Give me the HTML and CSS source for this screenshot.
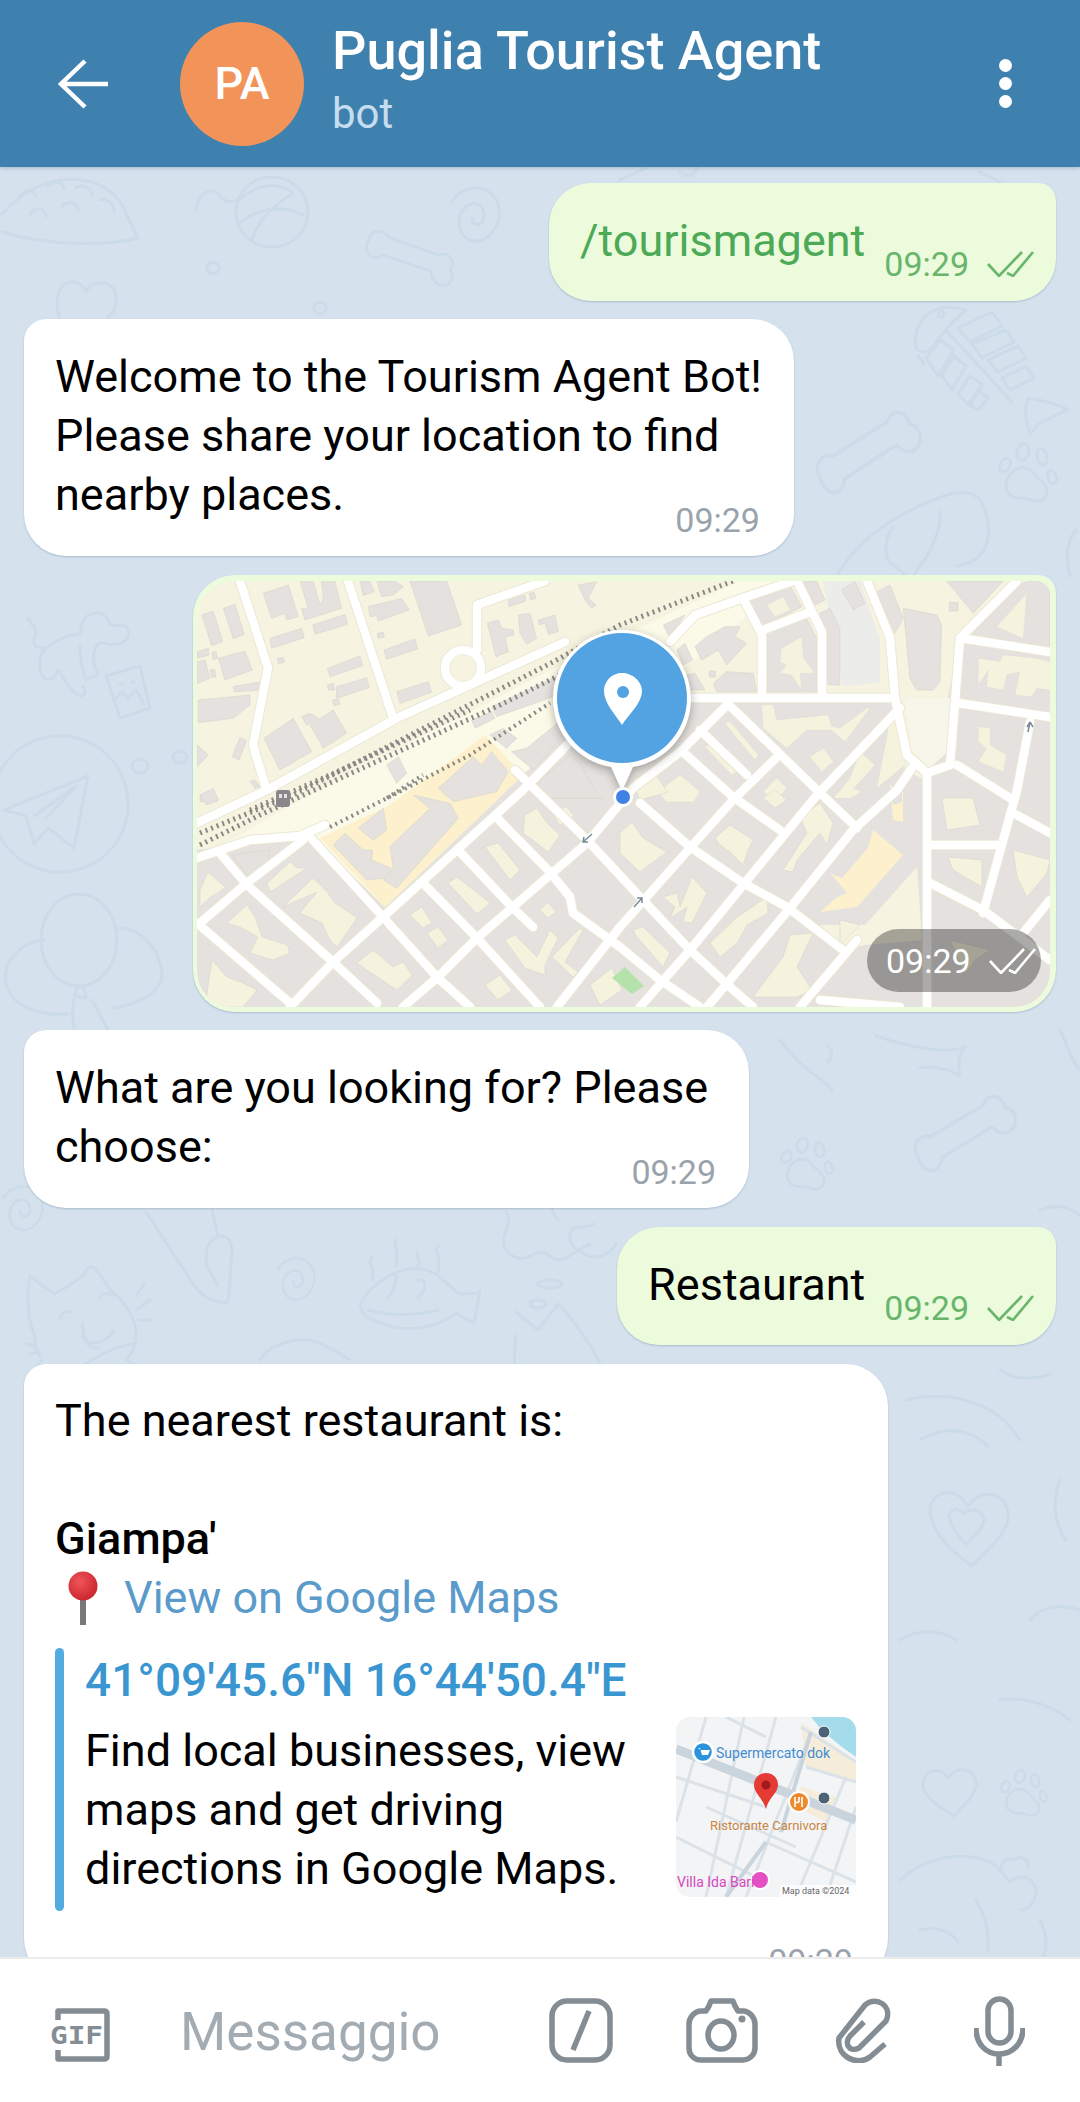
FILE: index.html
```html
<!DOCTYPE html>
<html lang="it">
<head>
<meta charset="utf-8">
<title>Puglia Tourist Agent</title>
<link rel="stylesheet" href="styles.css">
</head>
<body>
<div class="page">
  <header class="topbar">
    <svg class="back" viewBox="0 0 52 52"><path d="M50 26H4M27 3L3 26l24 23"/></svg>
    <div class="avatar">PA</div>
    <div class="peer">
      <div class="peer-name">Puglia Tourist Agent</div>
      <div class="peer-status">bot</div>
    </div>
    <div class="dots"><i></i><i></i><i></i></div>
  </header>

  <main class="chat">
    <svg class="doodles" viewBox="0 167 1080 1790" aria-hidden="true">
      <defs>
        <path id="bone" d="M8 50C0 40 8 30 20 32L70 6C72-4 88-4 90 8c12 0 14 16 4 20-6 2-12 0-16-4L30 50C30 62 14 66 8 50z"/>
        <g id="paw"><path d="M8 42c0-12 10-20 20-18 6 1 8 8 14 12 8 6 10 16 2 20-6 3-12-2-20-2-8 0-16-2-16-12z"/><ellipse cx="7" cy="21" rx="5" ry="7" transform="rotate(30 7 21)"/><ellipse cx="25" cy="8" rx="6" ry="8" transform="rotate(15 25 8)"/><ellipse cx="44" cy="13" rx="5" ry="8" transform="rotate(-12 44 13)"/><ellipse cx="54" cy="33" rx="4" ry="7" transform="rotate(-15 54 33)"/></g>
        <path id="spiral" d="M2 22C12 4 40 2 48 24c6 22-12 42-28 36C4 54 6 28 22 24c12-2 16 14 8 20-6 2-8-2-8-6"/>
      </defs>
      <!-- top -->
      <path d="M2 214c14-14 30-30 60-34 26-4 56 8 64 34l12 24c-30 8-92 8-136-6"/>
      <path d="M20 196c6-8 14-6 16 0M48 186c6-6 14-4 16 2M76 188c8-4 16 0 16 8M100 200c8-2 14 4 14 12M30 214c6-8 14-6 16 2M62 206c6-6 14-4 16 4"/>
      <ellipse cx="272" cy="212" rx="36" ry="35"/>
      <path d="M240 200c14-14 34-20 52-8M238 224c16-14 44-22 66-8M252 240c6-20 20-34 40-46M196 210c2-16 14-24 22-16 6 8 12 10 22 4"/>
      <use href="#spiral" transform="translate(450 180)"/>
      <use href="#bone" transform="translate(358 232) scale(1.05 1) rotate(48 50 30) scale(.9)"/>
      <circle cx="213" cy="268" r="6"/><circle cx="320" cy="308" r="6"/>
      <path d="M60 320c-6-18-2-38 12-38 8 0 12 4 14 10 6-14 28-12 30 4 2 8-4 18-12 26"/>
      <path d="M620 180l26-12M680 172c8 6 14 4 18-6M980 172l20 10"/>
      <!-- fish skeleton, bone, paw, wing -->
      <path d="M916 348c-2-14 2-26 12-34 10-8 24-8 38-4-12 10-26 26-34 38-4 4-10 6-16 0zM946 330l66 72M924 364l-6-8"/>
      <circle cx="941" cy="314" r="3"/>
      <path d="M958 328l34-16 10 14-32 16zM972 344l34-14 8 12-32 16zM988 360l30-14 8 12-28 14zM1002 378l24-12 8 12-24 12zM926 358l14-18 14 10-16 26zM942 376l12-20 12 10-14 24zM958 394l12-18 12 8-12 22zM968 404l10-14 10 8-10 12z"/>
      <path d="M1028 398c12 2 30 6 40 12-10 4-22 10-30 14-2 4-6 8-8 10-4-10-6-24-2-36z"/>
      <use href="#bone" transform="translate(812 414) scale(1.08 1.3)"/>
      <use href="#paw" transform="translate(998 444)"/>
      <path d="M838 574c24-42 74-68 112-80 18-4 30 0 34 14 6 14 6 30 0 42-8 12-18 14-26 16M892 528c-6 10-8 24-4 32 8 8 16 14 24 20 4-10 8-14 14-22 8-14 16-34 14-46"/>
      <path d="M1076 530c-8 10-12 24-6 46"/>
      <!-- left column -->
      <path d="M28 618c6 10 10 12 6 22-2 8 8 8 12 8-8 8-8 22-2 30 8 4 12-2 14-8 8 10 12 24 24 26 4-2 4-6 0-10M46 648c8-6 20-14 34-14 2-12 4-18 12-20 12-4 16 6 18 10 6 4 16-2 18 6 2 8-4 14-12 14-10 2-12-4-18 0-6 8-6 20 0 30l-12 6c-4-10-6-22-6-34"/>
      <path d="M106 676l34-10 10 42-30 10zM114 700l8-8 6 6 8-8 8 14M120 684h2M132 682h2"/>
      <circle cx="60" cy="804" r="68" transform="rotate(-15 60 804)"/>
      <path d="M4 810l84-34-14 72-26-20-14 16-8-28zM34 816l42-30-30 32"/>
      <ellipse cx="140" cy="766" rx="8" ry="7"/><ellipse cx="180" cy="757" rx="7" ry="6"/>
      <ellipse cx="79" cy="940" rx="38" ry="46"/>
      <path d="M44 940c-22 2-42 20-38 44 6 24 36 32 62 30M118 928c24 0 44 24 44 48-2 18-28 30-50 32M78 986l-4 10 12 2-2-10zM74 1000c-2 8-2 16 0 28M92 1000l16 30"/>
      <use href="#spiral" transform="translate(2 1180) scale(.82)"/>
      <!-- mid right -->
      <path d="M780 1040c22 30 40 36 52 50M828 1046c6 6 4 12 0 16M876 1036c30 10 72 20 90 10-8 10-8 18-6 30-12-8-28-10-40-8"/>
      <use href="#bone" transform="translate(910 1098) scale(1.05 1.2)"/>
      <use href="#paw" transform="translate(780 1138) scale(.9)"/>
      <path d="M640 1050c10 6 18 18 22 32M1060 1030c8 16 10 30 20 40M1040 1210c16-6 28-4 40 6"/>
      <circle cx="720" cy="1178" r="5"/>
      <!-- cat row -->
      <path d="M30 1276l24 18c10-6 20-10 30-20 2-4 6-8 8-8 8 8 14 16 18 24 10 8 20 18 24 32 4 12 2 28-8 38 14 6 26 16 32 20 8-2 14 0 16 6 4 6-2 12-8 14M30 1276c-4 22-2 44 4 58 2 8 0 16 6 22"/>
      <path d="M136 1310l14-10M138 1320h14M136 1296l8-12M60 1318c2-6 6-8 10-6M100 1298c4-6 8-6 12-2M82 1324c2 12 4 16 6 18 10 4 22-4 26-12M82 1336c4 6 8 14 16 12M26 1344l10 2M30 1354l8-2M36 1368l6-8M80 1368c14-10 30-20 52-24"/>
      <path d="M146 1212l50 76c8 10 22 16 32 14 2-10 2-30 4-50 0-12-4-16-12-16-10 2-14 12-14 24 0 8 6 14 12 26M212 1210l6 26"/>
      <use href="#spiral" transform="translate(276 1252) scale(.78)"/>
      <path d="M360 1305c10-22 40-40 62-36 14 2 24 14 36 24 10 2 20 0 22-2l-6 32c-6-2-12-6-18-10-22 18-56 20-80 8-10-2-14-8-16-16zM368 1310c20 6 50 6 70 0M396 1276c0 10-4 16-8 22M418 1280c6 0 8 2 6 10l-6 8"/>
      <path d="M396 1240c-4 6 4 10 0 16 0 4 2 6 0 10M372 1258c-6 6 4 10 0 16 0 2 2 4 0 6M418 1252c-4 6 4 8 0 14M438 1246c-6 6 4 10 0 16 0 4 2 6 0 10"/>
      <path d="M506 1212c8 10-6 24-2 34 4 10 16 16 26 10 8-4 12-6 20 0 6 6 16 4 22-2l18-10M594 1224c-8 6-20-2-24 10-2 12 6 14 14 20 14 8 28-2 32-10M550 1200c2 8 2 14 8 20"/>
      <path d="M516 1336c-2 8-2 30 0 42M516 1312l22 18 20-26c16 16 34 42 42 60"/>
      <ellipse cx="550" cy="1284" rx="12" ry="4"/><ellipse cx="538" cy="1304" rx="8" ry="4"/>
      <path d="M260 1360c8-14 30-22 50-20 14 4 28 12 40 20"/>
      <!-- bottom right -->
      <path d="M906 1400c40-10 90 0 114 40M1000 1370c14 10 34 10 50 4M920 1440c24-14 50-12 68 6"/>
      <path d="M932 1520c-10-24 20-40 36-14 16-22 44-10 40 14-4 18-24 32-36 46-16-12-34-26-40-46zM950 1520c-4-8 6-16 14-6 8-8 22-2 20 8-2 8-12 16-18 22-6-6-14-14-16-24z"/>
      <path d="M1060 1480c-8 20-6 44 6 60M1030 1620c12-14 30-16 50-10"/>
      <path d="M924 1790c-6-16 14-28 24-12 12-16 30-6 28 8-2 12-14 20-22 30-12-8-26-16-30-26z"/>
      <path d="M900 1640c14-10 40-12 56 0M1000 1700c22-4 50 4 70 20M900 1880c24-22 60-30 90-18 10 6 14 14 20 20 8-8 18-6 24 2 6 10-2 24-12 26M976 1900c8 14 14 30 12 50M1040 1920c6 12 8 24 4 36"/>
      <path d="M1002 1872c-4-8 4-16 12-12 6-6 16 0 14 8M920 1930c14-4 30 0 38 12"/>
      <use href="#paw" transform="translate(1000 1770) scale(.8)"/>
    </svg>

    <div class="msg out row-msg">
      <span class="cmd">/tourismagent</span>
      <span class="meta">09:29
        <svg class="ticks" viewBox="0 0 47 26"><path d="M1 13l11 12L35 1M20 22l6 3L46 1"/></svg>
      </span>
    </div>

    <div class="msg in first-in">
      <div class="body">Welcome to the Tourism Agent Bot!<br>Please share your location to find<br>nearby places.</div>
      <span class="meta grey">09:29</span>
    </div>

    <div class="msg out map-msg">
      <svg class="map" viewBox="197 581 853 426">
        <defs>
          <g id="r">
            <path d="M197 823L267 790L397 718L565 642"/>
            <path d="M240 581L268 668L253 745L265 785"/>
            <path d="M348 581L393 718"/>
            <path d="M477 650V605L545 581"/>
            <circle cx="463" cy="668" r="18"/>
            <path d="M197 858L250 840L300 836L325 825"/>
            <path d="M200 923L247 883L303 840"/>
            <path d="M290 1007L333 962L383 917L523 790L567 745"/>
            <path d="M403 1007L438 977L477 938L587 843L633 788L680 752L727 705"/>
            <path d="M557 1007L620 927L690 848L733 800L777 757"/>
            <path d="M640 1007L690 950L753 873L817 795L900 708"/>
            <path d="M707 1007L730 980L790 908L853 830L897 790L912 768"/>
            <path d="M800 1007L857 940"/>
            <path d="M310 837L383 917L437 977L470 1007"/>
            <path d="M220 853L247 885L333 962L377 1003"/>
            <path d="M197 923L290 1003"/>
            <path d="M423 883L477 938L540 1007"/>
            <path d="M460 852L510 905L533 927"/>
            <path d="M497 818L548 870L570 897L573 913L620 947L660 980L700 1007"/>
            <path d="M515 770L587 840L640 897L690 950L730 987L753 1007"/>
            <path d="M640 803L690 847L743 883L787 907L843 950"/>
            <path d="M733 797L780 830"/>
            <path d="M727 703L817 790L857 828"/>
            <path d="M700 730L747 775"/>
            <path d="M683 752L733 797"/>
            <path d="M693 698H895"/>
            <path d="M867 581L890 638L895 698L907 755L927 773L950 765L955 702L960 638L1017 581"/>
            <path d="M670 642L695 615L743 598L793 581"/>
            <path d="M743 598L762 635V693"/>
            <path d="M797 581L822 632V693"/>
            <path d="M763 630L810 612"/>
            <path d="M960 638L1050 652"/>
            <path d="M958 703L1050 717"/>
            <path d="M927 773V1007"/>
            <path d="M957 765L1010 798"/>
            <path d="M1030 722L1017 790L983 913"/>
            <path d="M930 845H997"/>
            <path d="M930 883L983 910L1050 960"/>
            <path d="M1013 813L1050 833"/>
            <path d="M1020 937L1050 900"/>
            <path d="M820 1000L900 1007"/>
          </g>
        </defs>
        <rect class="land" x="197" y="581" width="853" height="426"/>
        <path class="pale" d="M197 860L300 800L570 660L740 581H790L620 720L385 907L310 835Z"/>
        <path class="block" d="M197 850L310 835L385 907L523 775L570 730L640 695L895 700L905 770L925 780V1007H197Z"/>
        <path class="block" d="M932 772L960 640L1050 650V1007H932Z"/>
        <path class="yellow" d="M320 838L390 805L485 735L523 775L385 907Z"/>
        <path class="land" d="M820 925L865 925L917 867L922 940L865 945L840 950Z"/>
        <path class="plaza" d="M905 698H958L950 750L930 768L912 750Z"/>
        <path class="lot" d="M823 581H860L880 640V682L843 687Z"/>
        <path class="yellow" d="M820 912L857 907L903 855L873 830L868 848L842 878L830 873L847 893L837 897Z"/>
        <path class="yellow" d="M893 820L903 822V792L890 785ZM893 793L902 790V802L893 805Z"/>
        <g class="bld" transform="translate(190 575) scale(.3333)">
          <path d="M220 55L295 30L325 125L290 135L285 115L245 130Z"/>
          <path d="M330 20H370L390 90L400 70L395 20H435L455 100L345 135L335 100L355 100Z"/>
          <path d="M35 120L70 108L98 200L65 212Z"/><path d="M100 100L135 88L163 178L130 192Z"/>
          <path d="M85 250L165 228L187 285L105 315Z"/><path d="M240 190L335 160L343 188L245 220Z"/>
          <path d="M368 150L465 118L473 148L375 178Z"/><path d="M25 375L180 360V390L130 430L25 443Z"/>
          <path d="M130 335L215 320L218 345L133 350Z"/><path d="M222 490L310 430L365 530L270 585Z"/>
          <path d="M360 450L430 405L470 475L400 520Z"/><path d="M335 425L360 415L385 430L350 450Z"/>
          <path d="M127 545L150 487L170 497L147 555Z"/><path d="M412 280L510 243L518 272L420 305Z"/>
          <path d="M440 335L530 308L538 338L440 370Z"/><path d="M412 330L430 325L435 345L415 345Z"/>
          <path d="M428 375L445 372L450 388L432 392Z"/><path d="M582 225L675 192L683 222L590 253Z"/>
          <path d="M620 350L715 320L725 352L630 385Z"/><path d="M660 18H770L815 150L715 183Z"/>
          <path d="M510 18H540L553 50L520 62Z"/><path d="M535 95L635 70L658 105L565 138L560 122L540 125Z"/>
          <path d="M560 18H615L640 35L610 60L575 65Z"/>
          <path d="M892 145L925 135L935 160L970 165L972 180L945 185L955 230L918 245Z"/>
          <path d="M985 120L1020 115L1040 190L1010 208L990 175Z"/>
          <path d="M1045 135L1095 120L1105 170L1075 178L1065 145L1048 150Z"/>
          <path d="M955 75L1005 60L1007 78L958 95Z"/><path d="M1018 55L1033 52L1037 70L1022 75Z"/>
          <path d="M1165 30L1220 20L1195 70L1218 90L1205 100L1185 75Z"/>
          <path d="M22 260L45 255L60 310L22 325Z"/><path d="M65 232L78 230L83 250L70 255Z"/>
          <path d="M60 285L73 282L78 305L65 308Z"/><path d="M22 230L55 220L57 240L22 250Z"/>
          <path d="M262 250L280 248L283 262L266 266Z"/><path d="M562 175L580 172L583 186L565 190Z"/>
          <path d="M22 510L55 540L22 575Z"/><path d="M180 620L195 615L210 635L195 640Z"/>
          <path d="M590 570L625 545L650 595L620 625Z"/><path d="M905 395L1100 305L1105 360L920 425Z"/>
          <path d="M845 435L905 410L915 430L855 460Z"/>
          <path d="M745 640L850 545L875 570L905 530L955 590L920 650L790 680Z"/>
          <path d="M900 480L940 460L980 490L950 520Z"/><path d="M965 530L1010 520L1120 430L1130 470L1030 585Z"/>
          <path d="M1040 625L1140 540L1170 565L1210 640L1240 670H1040Z"/>
          <path d="M30 660L85 670L80 680H30Z"/>
        </g>
        <g class="bld" transform="translate(190 790) scale(.3333)">
          <path d="M430 165L465 130L520 180L548 180L545 210L615 240L580 265L530 270Z"/>
          <path d="M505 115L580 55L590 120L550 150Z"/>
          <path d="M600 170L720 55L670 15L780 40L805 85L620 295L580 270L610 235Z"/>
          <path d="M125 195L240 180L235 215L175 260Z"/>
          <path d="M30 15L70 -5L85 30L50 45Z"/>
        </g>
        <g class="bld" transform="translate(620 575) scale(.3333)">
          <path d="M850 100L950 120L965 150L960 320L940 345L890 345L870 310Z"/>
          <path d="M770 50L810 30L850 130L825 175Z"/>
          <path d="M980 18H1150L1060 115Z"/><path d="M988 82H1014V108H988Z"/>
          <path d="M600 115L630 100L660 160V330H625Z"/><path d="M665 45L705 20L735 85L700 105Z"/>
          <path d="M550 18H590L615 75L585 90Z"/>
          <path d="M440 170L560 130L590 190V350H440Z"/><path d="M390 80L510 30L545 95L430 155Z"/>
          <path d="M225 215L260 185L315 155L360 155L345 185L380 205L320 270L295 225L245 255Z"/>
          <path d="M280 325L320 290L400 295L410 350H290Z"/><path d="M268 288H286V306H268Z"/>
          <path d="M130 150L195 120L150 190Z"/>
          <path d="M1050 185L1190 30L1230 18H1290V230Z"/>
          <path d="M170 225L195 205L218 255L190 270Z"/><path d="M200 300L225 295L255 345H210Z"/>
        </g>
        <g class="tan" transform="translate(620 575) scale(.3333)">
          <path d="M485 220L545 185L550 250L585 295L540 295L545 345L515 300L480 295L500 270L480 260Z"/>
          <path d="M440 90L490 65L510 105L465 125Z"/>
          <path d="M1130 155L1220 55L1210 190Z"/>
          <path d="M1075 250L1140 260L1150 240L1250 250L1290 260V345L1250 340L1235 365L1185 360L1200 290L1160 300L1150 345L1100 335L1105 285L1075 330Z"/>
          <path d="M1075 455L1110 460V510L1160 540L1150 590L1075 560L1100 520L1075 500Z"/>
          <path d="M425 390H460L470 435L625 420L635 455L660 460L740 400H750L675 500L635 465L560 465L500 520L430 460Z"/>
          <path d="M570 545L610 520L640 560L605 590Z"/>
          <path d="M800 440L835 435L855 570L770 640L805 465Z"/>
          <path d="M315 445L330 440L415 540L405 555Z"/><path d="M255 515L270 510L350 590L335 600Z"/>
          <path d="M115 650L180 600L240 650L220 680H140Z"/><path d="M430 650L470 610L500 640L470 675Z"/>
          <path d="M720 530L765 570L730 610L700 640L725 650L690 670L640 670L690 610Z"/>
        </g>
        <g class="tan">
          <path d="M267 883L290 862L297 868L307 868L270 892Z"/>
          <path d="M283 907L313 878L328 893L335 903L357 918L337 947L330 940L322 923L300 913L317 892Z"/>
          <path d="M227 923L247 905L255 917L262 937L287 945L290 953L273 960L250 953L258 937L240 927Z"/>
          <path d="M200 890L208 872L225 887L218 893L210 897L200 907Z"/>
          <path d="M485 847L498 843L520 870L510 880Z"/><path d="M448 883L457 877L490 903L477 914Z"/>
          <path d="M410 915L422 907L432 923L423 928Z"/><path d="M427 933L438 927L448 940L438 948Z"/>
          <path d="M525 815L537 808L547 823L560 835L548 852L533 840L523 833Z"/>
          <path d="M540 910L548 902L556 912L548 918Z"/>
          <path d="M505 940L515 935L537 957L550 930L558 938L545 965V975L525 968Z"/>
          <path d="M552 957L580 928L583 930L565 962L578 972L573 977Z"/>
          <path d="M357 963L373 950L393 967L403 962L412 975L397 990L367 970Z"/>
          <path d="M212 960L227 977L243 983L257 990L243 1007H205Z"/>
          <path d="M620 833L632 822L643 838L658 847L667 852L640 872L620 853Z"/>
          <path d="M715 838L730 825L753 840L748 850L743 865L730 852L720 845Z"/>
          <path d="M663 897L677 893L680 907L692 877L707 893L692 923L683 922L687 907L670 918L675 907Z"/>
          <path d="M783 870L807 833L800 817L820 803L833 823L827 845L820 833L797 860L793 872Z"/>
          <path d="M710 943L737 917L767 897L768 913L747 925L737 943L720 957Z"/>
          <path d="M633 930L643 927L670 953L663 967L637 937Z"/>
          <path d="M753 997L783 957L790 935L813 933L797 967L812 990L797 997Z"/>
          <path d="M942 798H973L980 825L947 830Z"/><path d="M948 857L982 860V887L953 870Z"/>
          <path d="M1013 850L1050 860L1047 873L1027 897L1017 877Z"/>
          <path d="M763 798L775 790L787 800L775 808Z"/>
          <path d="M553 815L566 806L574 816L560 825Z"/><path d="M632 780L652 770L668 792L640 800Z"/>
          <path d="M485 985L500 975L512 990L498 1000Z"/><path d="M590 985L612 968L622 990L600 1005Z"/>
          <path d="M950 940L965 975L975 960L990 950Z"/><path d="M840 945V920L860 925Z"/>
        </g>
        <path class="green" d="M612 978L625 967L644 986L632 994Z"/>
        <g class="casing"><use href="#r"/></g>
        <g class="road"><use href="#r"/></g>
        <circle class="land" cx="463" cy="668" r="13"/>
        <path class="rail" d="M200 833L293 795L553 662L620 625L733 581"/>
        <path class="rail" d="M200 845L260 815L500 705L610 650"/>
        <path class="rail" d="M250 810L330 775L470 710"/>
        <path class="rail thin" d="M330 827L397 793L470 755L550 703"/>
        <path class="rail thin" d="M387 798L423 775"/>
        <rect class="tram" x="276" y="790" width="14" height="17" rx="3"/>
        <path class="tram-win" d="M279 794h3v4h-3zM284 794h3v4h-3z"/>
        <path class="arrow" d="M592 834L583 842M584 837L583 842L588 842M634 907L642 898M637 898L642 898L642 903M1030 722L1028 732M1030 722L1027 727M1030 722L1033 727"/>
        <g class="pin">
          <path class="pin-shell" d="M622 630c38 0 69 31 69 69 0 35-26 63-58 68l-11 24-11-24c-32-5-58-33-58-68 0-38 31-69 69-69z"/>
          <circle class="pin-blue" cx="622" cy="698" r="65"/>
          <path class="pin-white" d="M622 673c-10 0-18 8-18 18 0 12 11 23 18 34 7-11 20-22 20-34 0-10-10-18-20-18z"/>
          <circle class="pin-blue" cx="623" cy="692" r="6"/>
          <circle class="pin-white" cx="623" cy="797" r="10"/>
          <circle class="pin-dot" cx="623" cy="797" r="7"/>
        </g>
      </svg>
      <span class="meta map-time">09:29
        <svg class="ticks" viewBox="0 0 47 26"><path d="M1 13l11 12L35 1M20 22l6 3L46 1"/></svg>
      </span>
    </div>

    <div class="msg in wide-4">
      <div class="body">What are you looking for? Please<br>choose:</div>
      <span class="meta grey">09:29</span>
    </div>

    <div class="msg out row-msg restaurant">
      <span class="plain">Restaurant</span>
      <span class="meta">09:29
        <svg class="ticks" viewBox="0 0 47 26"><path d="M1 13l11 12L35 1M20 22l6 3L46 1"/></svg>
      </span>
    </div>

    <div class="msg in result">
      <div class="body">The nearest restaurant is:<br><br><strong>Giampa'</strong></div>
      <div class="link-line">
        <svg class="pin-emoji" viewBox="0 0 30 54">
          <defs><radialGradient id="ball" cx=".4" cy=".35" r=".7"><stop offset="0" stop-color="#f0545a"/><stop offset="1" stop-color="#c8242c"/></radialGradient></defs>
          <rect x="12" y="26" width="6" height="28" fill="#77787a"/>
          <circle cx="15" cy="15" r="14.500" fill="url(#ball)"/>
        </svg>
        <span class="link">View on Google Maps</span>
      </div>
      <div class="preview">
        <div class="bar"></div>
        <div class="preview-main">
          <div class="preview-title">41°09'45.6"N 16°44'50.4"E</div>
          <div class="preview-row">
            <div class="preview-desc">Find local businesses, view<br>maps and get driving<br>directions in Google Maps.</div>
            <svg class="thumb" viewBox="0 0 180 180">
              <rect width="180" height="180" fill="#f3f4f5"/>
              <path d="M135 0H180V40Q150 20 135 0Z" fill="#a5dcec"/>
              <path d="M125 5L180 45V65L130 50ZM125 70L160 80L150 105L120 90Z" fill="#f5ecd9"/>
              <g class="tr-minor">
                <path d="M30 0L0 105M68 0L30 180M100 0L50 180M135 15L70 180M170 60L120 180M180 90L150 180"/>
                <path d="M0 60L90 90M30 90L120 130M0 120L90 165M90 125L180 165M125 10L180 45M130 50L180 65M50 0L90 20"/>
              </g>
              <path class="tr-main" d="M0 32L180 103"/>
              <path class="tr-mid" d="M90 125L50 180M135 15L105 115"/>
              <circle cx="27" cy="35" r="10" fill="#2b93dc" stroke="#fff" stroke-width="2.500"/>
              <path d="M22 31h2l2 7h6l2-5h-9" fill="#fff"/>
              <text class="t-blue" x="40" y="41">Supermercato dok</text>
              <circle cx="123" cy="85" r="10" fill="#ee8a2c" stroke="#fff" stroke-width="2"/>
              <path d="M119 80v10M123 80v4c0 2-4 2-4 0M126 80v10" fill="none" stroke="#fff" stroke-width="1.600"/>
              <text class="t-brown" x="34" y="113">Ristorante Carnivora</text>
              <circle cx="148" cy="15" r="6" fill="#4c6277" stroke="#fff"/>
              <circle cx="148" cy="81" r="6" fill="#4c6277" stroke="#fff"/>
              <path d="M90 56c-7 0-12 5-12 12 0 8 8 12 12 24 3-12 12-16 12-24 0-7-5-12-12-12z" fill="#e53b35"/>
              <circle cx="90" cy="68" r="4.500" fill="#a3191c"/>
              <circle cx="84" cy="163" r="9" fill="#e54fc4" stroke="#fff" stroke-width="2"/>
              <text class="t-pink" x="1" y="170">Villa Ida Bari</text>
              <rect x="104" y="168" width="76" height="12" fill="#fff" opacity=".8"/>
              <text class="t-legal" x="106" y="177">Map data ©2024</text>
            </svg>
          </div>
        </div>
      </div>
      <div class="meta grey result-time">09:29</div>
    </div>
  </main>

  <footer class="inputbar">
    <svg class="i-gif" viewBox="0 0 60 54">
      <path class="ico" d="M8 12V3h46c2 0 3 1 3 3v42c0 2-1 3-3 3H8v-9"/>
      <text class="gif-txt" x="0" y="36" textLength="53" lengthAdjust="spacingAndGlyphs">GIF</text>
    </svg>
    <div class="placeholder">Messaggio</div>
    <div class="actions">
      <svg class="i-slash" viewBox="0 0 64 65"><rect class="ico" x="3" y="3" width="58" height="59" rx="15"/><path class="ico" d="M40 13L24 52"/></svg>
      <svg class="i-cam" viewBox="0 0 72 65"><path class="ico" d="M15 13h5l3-5 2-5h22l2 5 3 5h5c6 0 12 6 12 13v24c0 7-6 12-12 12H15C8 62 3 57 3 50V26c0-7 6-13 12-13z"/><ellipse class="ico" cx="35" cy="37" rx="13" ry="14"/><circle class="ico-fill" cx="56" cy="21" r="3.500"/></svg>
      <svg class="i-clip" viewBox="0 0 57 65"><path class="ico" d="M50 46L35 59C22 69 1 58 4 40L30 7C41-3 58 8 51 23L24 50C14 55 9 45 15 38L29 24"/></svg>
      <svg class="i-mic" viewBox="0 0 51 70"><rect class="ico" x="14" y="3" width="23" height="44" rx="11.500"/><path class="ico" d="M2 32c0 16 10 26 23 26s24-10 24-26M25 58v12"/></svg>
    </div>
  </footer>
</div>
</body>
</html>
```

FILE: styles.css
```css
* { box-sizing: border-box; }
html, body { margin: 0; padding: 0; }
body { font-family: Roboto, "Liberation Sans", sans-serif; background: #fff; }
.page { width: 1080px; height: 2102px; display: flex; flex-direction: column; overflow: hidden; }

.topbar { height: 167px; flex: none; background: #3f81ae; display: flex; align-items: center; padding-left: 58px; position: relative; z-index: 2; box-shadow: 0 1px 4px rgba(30,60,90,.25); }
.back { width: 52px; height: 52px; flex: none; }
.back path { fill: none; stroke: #fff; stroke-width: 4.500; }
.avatar { width: 124px; height: 124px; margin-left: 70px; border-radius: 50%; background: #f2935a; color: #fff; font-size: 45px; font-weight: 500; display: flex; align-items: center; justify-content: center; flex: none; }
.peer { margin-left: 28px; flex: 1; }
.peer-name { color: #fff; font-size: 54px; font-weight: 500; line-height: 60px; margin-top: -9px; }
.peer-status { color: #c6ddef; font-size: 42px; line-height: 48px; margin-top: 9px; }
.dots { display: flex; flex-direction: column; gap: 5px; margin-right: 68px; }
.dots i { width: 13px; height: 13px; border-radius: 50%; background: #fff; }

.chat { flex: 1; min-height: 0; background: #d5e2ee; padding: 16px 24px 0; display: flex; flex-direction: column; gap: 18px; overflow: hidden; position: relative; }
.doodles { position: absolute; left: 0; top: 0; width: 1080px; height: 1790px; fill: none; stroke: #cbdbe8; stroke-width: 3; stroke-linecap: round; stroke-linejoin: round; }
.doodles use { fill: none; }

.msg { position: relative; flex: none; font-size: 45px; line-height: 59px; color: #000; border-radius: 42px; box-shadow: 0 1px 2px rgba(70,100,130,.3); }
.msg.in { align-self: flex-start; background: #fff; border-top-left-radius: 22px; padding: 28px 32px 16px 31px; display: flex; flex-direction: column; }
.msg.out { align-self: flex-end; background: #edfbdd; border-top-right-radius: 18px; }
.row-msg { display: flex; align-items: flex-end; gap: 19px; padding: 28px 22px 17px 31px; }
.row-msg .cmd, .row-msg .plain { margin-bottom: 14px; }
.cmd { color: #4ca955; }
.body strong { font-weight: 500; }
.restaurant { margin-top: 1px; }

.meta { height: 40px; display: flex; align-items: center; gap: 18px; font-size: 34px; line-height: 40px; color: #68b56c; flex: none; }
.meta.grey { color: #9aa3ab; align-self: flex-end; margin-top: -24px; }
.first-in .meta { margin-right: 2px; }
.ticks { width: 47px; height: 26px; flex: none; }
.ticks path { fill: none; stroke: currentColor; stroke-width: 2.600; }
.msg.in.wide-4 { padding-right: 41px; }
.wide-4 .meta { margin-right: -8px; }

.map-msg { margin-top: 1px; padding: 6px 6px 5px 4px; border-top-right-radius: 18px; }
.map { display: block; width: 853px; height: 426px; border-radius: 38px 14px 36px 36px; }
.map-time { position: absolute; left: 674px; top: 354px; width: 174px; height: 63px; border-radius: 32px; background: rgba(0,0,0,.33); color: #fff; padding-left: 19px; }

.land { fill: #f6f4e0; }
.pale { fill: #fbfae8; }
.block { fill: #e4e1de; }
.yellow { fill: #fcf1cc; }
.plaza { fill: #f7f6ea; }
.lot { fill: #ececea; }
.bld path { fill: #e4e1de; stroke: #d9d6cf; stroke-width: 2; }
.tan path { fill: #f5f3de; stroke: #d9d6cf; stroke-width: .6; }
.casing { fill: none; stroke: #ebe8d4; stroke-width: 10.500; stroke-linecap: round; stroke-linejoin: round; }
.road { fill: none; stroke: #fff; stroke-width: 8.500; stroke-linecap: round; stroke-linejoin: round; }
.rail { fill: none; stroke: #8b8885; stroke-width: 5; stroke-dasharray: 2 4; }
.rail.thin { stroke-width: 4; }
.green { fill: #b5e2ab; }
.tram { fill: #88878a; }
.tram-win { fill: #e4e1de; }
.arrow { fill: none; stroke: #7a8b98; stroke-width: 1.500; }
.pin-shell { fill: #fff; filter: drop-shadow(0 3px 5px rgba(0,0,0,.3)); }
.pin-blue { fill: #53a3e2; }
.pin-white { fill: #fff; }
.pin-dot { fill: #3f81e4; }

.msg.in.result { width: 864px; margin-top: 1px; padding-top: 27px; padding-bottom: 0; }
.link-line { display: flex; align-items: center; height: 59px; }
.pin-emoji { width: 30px; height: 54px; margin-left: 13px; margin-right: 26px; flex: none; }
.link { color: #5a9bcb; }
.preview { display: flex; margin-top: 21px; height: 263px; }
.bar { width: 9px; border-radius: 5px; background: #53ace0; flex: none; }
.preview-main { margin-left: 21px; flex: 1; min-width: 0; }
.preview-title { color: #3a96d1; font-size: 46px; font-weight: 500; line-height: 59px; margin-top: 3px; }
.preview-row { display: flex; justify-content: space-between; margin-top: 11px; }
.preview-desc { line-height: 59px; }
.thumb { width: 180px; height: 180px; margin-top: -4px; border-radius: 14px; flex: none; }
.tr-minor { fill: none; stroke: #dbe2e8; stroke-width: 3; }
.tr-main { fill: none; stroke: #c9d4dc; stroke-width: 9; }
.tr-mid { fill: none; stroke: #c9d4dc; stroke-width: 4; }
.t-blue, .t-brown, .t-pink { font-family: Roboto, sans-serif; stroke: none; }
.t-blue { font-size: 14px; fill: #3f8cd0; }
.t-brown { font-size: 13px; fill: #c88544; }
.t-pink { font-size: 14px; fill: #d848c0; }
.t-legal { font-family: Roboto, sans-serif; font-size: 9px; fill: #666; }
.result-time { margin-top: 30px !important; margin-right: 3px; }

.inputbar { height: 145px; flex: none; background: #fff; border-top: 2px solid #ececec; display: flex; align-items: center; padding: 0 55px 0 50px; position: relative; z-index: 2; }
.i-gif { width: 60px; height: 54px; flex: none; margin-top: 8px; }
.placeholder { margin-left: 70px; font-size: 53px; color: #a3abb3; flex: 1; margin-top: 2px; }
.actions { display: flex; align-items: center; gap: 73px; }
.ico { fill: none; stroke: #848c94; stroke-width: 5.500; stroke-linejoin: round; }
.ico-fill { fill: #848c94; }
.gif-txt { font-family: "DejaVu Sans Mono", monospace; font-weight: 700; font-size: 24px; fill: #848c94; }
.i-slash { width: 64px; height: 65px; }
.i-cam { width: 72px; height: 65px; margin-right: 4px; }
.i-clip { width: 57px; height: 65px; margin-right: 9px; }
.i-mic { width: 51px; height: 70px; }
```
